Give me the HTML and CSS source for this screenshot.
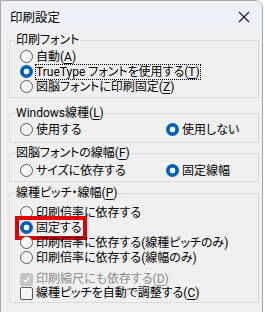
FILE: index.html
```html
<!DOCTYPE html>
<html lang="ja">
<head>
<meta charset="utf-8">
<link rel="stylesheet" href="styles.css">
</head>
<body>
<div class="window">
  <div class="titlebar">
    <span class="title">印刷設定</span>
    <span class="close"><svg width="12" height="12" viewBox="0 0 12 12"><path d="M1 1L11 11M11 1L1 11" stroke="#1a1a1a" stroke-width="1.1" fill="none"/></svg></span>
  </div>
  <div class="content">
    <fieldset class="group g1">
      <legend>印刷フォント</legend>
      <div class="opt"><span class="radio"></span><span class="txt">自動(<u>A</u>)</span></div>
      <div class="opt"><span class="radio on"></span><span class="txt focus">TrueType フォントを使用する(<u>T</u>)</span></div>
      <div class="opt"><span class="radio"></span><span class="txt">図脳フォントに印刷固定(<u>Z</u>)</span></div>
    </fieldset>
    <fieldset class="group g2">
      <legend>Windows線種(<u>L</u>)</legend>
      <div class="row">
        <div class="opt col"><span class="radio"></span><span class="txt">使用する</span></div>
        <div class="opt"><span class="radio on"></span><span class="txt">使用しない</span></div>
      </div>
    </fieldset>
    <fieldset class="group g3">
      <legend>図脳フォントの線幅(<u>F</u>)</legend>
      <div class="row">
        <div class="opt col"><span class="radio"></span><span class="txt">サイズに依存する</span></div>
        <div class="opt"><span class="radio on"></span><span class="txt">固定線幅</span></div>
      </div>
    </fieldset>
    <fieldset class="group g4">
      <legend>線種ピッチ・線幅(<u>P</u>)</legend>
      <div class="opt"><span class="radio"></span><span class="txt">印刷倍率に依存する</span></div>
      <div class="opt"><span class="mark"><span class="radio on"></span><span class="txt">固定する</span></span></div>
      <div class="opt"><span class="radio"></span><span class="txt">印刷倍率に依存する(線種ピッチのみ)</span></div>
      <div class="opt"><span class="radio"></span><span class="txt">印刷倍率に依存する(線幅のみ)</span></div>
      <div class="opt chk chk-first disabled"><span class="check on"><svg width="9" height="9" viewBox="0 0 9 9"><path d="M1.5 4.6L3.6 6.7L7.6 2.2" stroke="#fff" stroke-width="1.2" fill="none"/></svg></span><span class="txt">印刷縮尺にも依存する(<u>D</u>)</span></div>
      <div class="opt chk"><span class="check"></span><span class="txt">線種ピッチを自動で調整する(<u>C</u>)</span></div>
    </fieldset>
  </div>
</div>
</body>
</html>
```

FILE: styles.css
```css
html, body {
  margin: 0;
  padding: 0;
  background: #ffffff;
}
body {
  font-family: Roboto, "Noto Sans CJK JP", sans-serif;
  font-size: 12px;
  font-feature-settings: "palt";
  color: #000;
}
.window {
  width: 261px;
  height: 320px;
  border: 1px solid #a8a8a8;
  border-top-right-radius: 8px;
  background: #f0f0f0;
  overflow: hidden;
}
.titlebar {
  height: 30px;
  background: #eef2f8;
  display: flex;
  align-items: center;
  justify-content: space-between;
  padding: 0 12px 0 9px;
}
.title {
  font-size: 12.5px;
}
.close {
  display: flex;
  margin-top: 1px;
}
.content {
  padding: 2px 3px 0 8px;
}
.group {
  margin: 0;
  padding: 0 0 0 10px;
  border: 1px solid #dcdcdc;
  min-width: 0;
}
.group legend {
  padding: 0 1px;
  margin-left: -5px;
  height: 14px;
  line-height: 14px;
}
.g1 {
  padding-top: 2px;
  padding-bottom: 3px;
}
.g2 {
  margin-top: 8px;
  padding-top: 2px;
  padding-bottom: 5px;
}
.g3 {
  margin-top: 3px;
  padding-top: 3px;
  padding-bottom: 3px;
}
.g4 {
  margin-top: 4px;
  padding-top: 5px;
  padding-bottom: 2px;
}
.opt {
  display: flex;
  align-items: center;
  height: 15px;
}
.chk {
  height: 14px;
}
.row {
  display: flex;
}
.col {
  width: 146px;
}
.radio {
  width: 11px;
  height: 11px;
  border: 1px solid #5a5a5a;
  border-radius: 50%;
  background: #f6f6f6;
  flex: none;
  box-sizing: content-box;
}
.radio.on {
  width: 13px;
  height: 13px;
  border: none;
  background: radial-gradient(circle, #fff 0 2.6px, #005fb8 3.2px);
}
.txt {
  margin-left: 3px;
  white-space: nowrap;
  line-height: 14px;
}
.focus {
  outline: 1px dotted #000;
  outline-offset: 0;
}
.mark {
  display: flex;
  align-items: center;
  outline: 4px solid #e50000;
  outline-offset: 1px;
}
.check {
  width: 11px;
  height: 11px;
  border: 1px solid #5a5a5a;
  border-radius: 2px;
  background: #f6f6f6;
  flex: none;
  display: flex;
  align-items: center;
  justify-content: center;
}
.check.on {
  background: #c5c5c5;
  border-color: #c5c5c5;
}
.chk-first {
  margin-top: 7px;
}
.disabled .txt {
  color: #8c8c8c;
}
u {
  text-decoration-thickness: 1px;
  text-underline-offset: 2px;
}
```
